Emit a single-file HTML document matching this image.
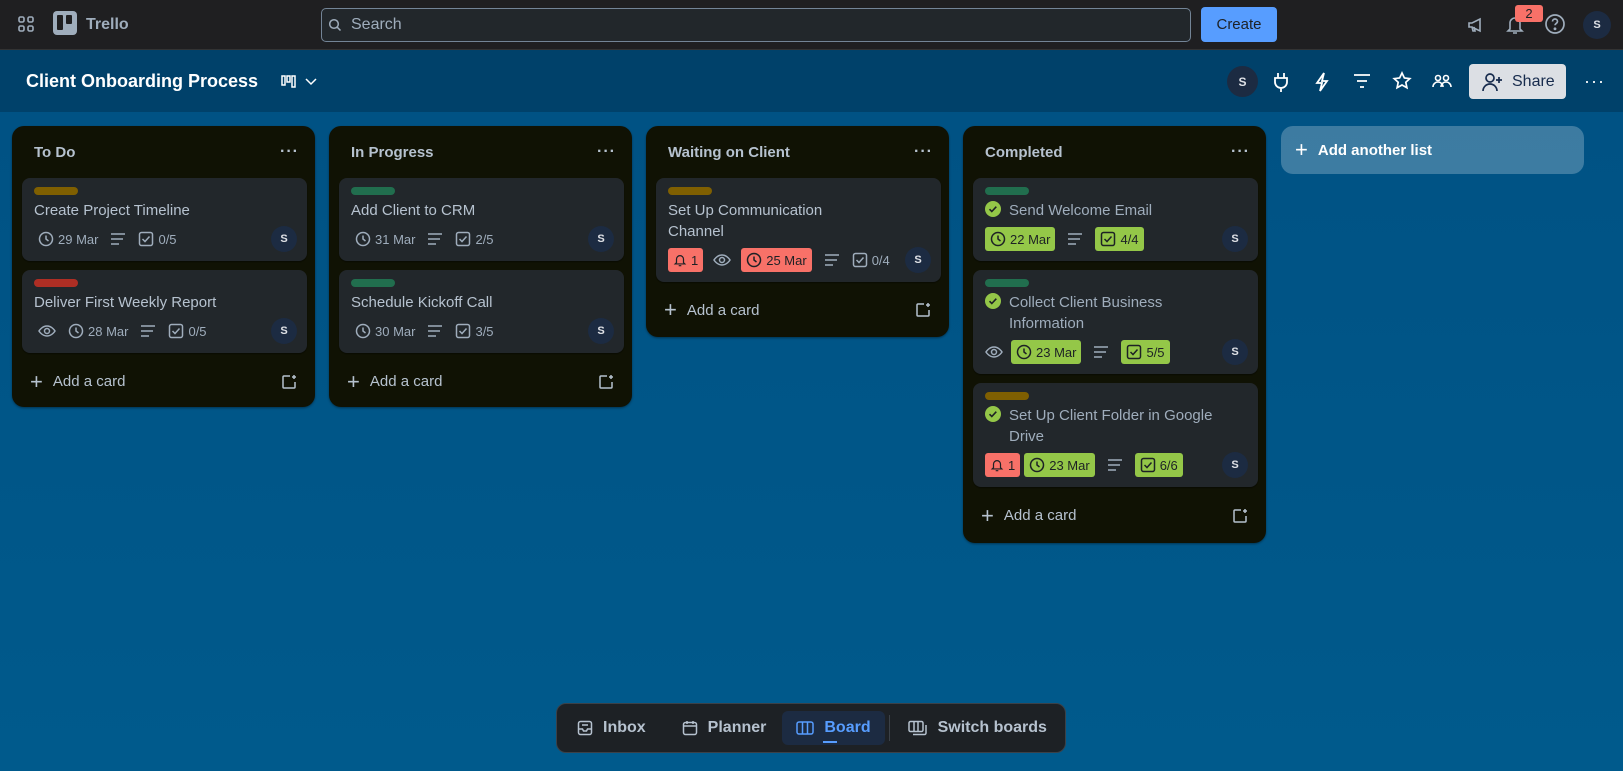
<!DOCTYPE html>
<html><head><meta charset="utf-8"><style>
*{box-sizing:border-box;margin:0;padding:0}
body{width:1623px;height:771px;overflow:hidden;font-family:"Liberation Sans",sans-serif;background:#005a8c;color:#b6c2cf;position:relative}
.top{position:absolute;left:0;top:0;width:1623px;height:50px;background:#1f1f21;border-bottom:1px solid #333}
.bh{position:absolute;left:0;top:50px;width:1623px;height:62px;background:#00416a}
.board{position:absolute;left:0;top:112px;width:1623px;height:659px;background:linear-gradient(#005284,#005a8c)}
.abs{position:absolute}
.list{position:absolute;top:126px;width:303px;background:#101204;border-radius:12px;box-shadow:0 1px 2px rgba(0,0,0,.4)}
.lh{height:52px;padding:0 0 0 22px;display:flex;align-items:center;justify-content:space-between;font-weight:bold;font-size:15px;color:#b6c2cf}
.dots{margin-right:16px;letter-spacing:1px;font-size:16px}
.card{margin:0 8px 9px 10px;background:#22272b;border-radius:8px;padding:9px 12px 8px 12px;position:relative;box-shadow:0 1px 1px rgba(0,0,0,.4)}
.lab{width:44px;height:8px;border-radius:4px;margin-bottom:5px}
.t{font-size:15px;line-height:21px;color:#b6c2cf}
.meta{display:flex;align-items:center;height:28px;margin-top:4px;font-size:13px;color:#9fadbc}
.meta>span{display:flex;align-items:center;margin-right:12px;gap:4px}
.badge{padding:0 5px;height:24px;border-radius:3px}
.g{background:#94c748;color:#1d2125}.r{background:#f87168;color:#1d2125}
.av{position:absolute;right:10px;bottom:9px;width:26px;height:26px;border-radius:50%;background:#1c2b42;color:#dfe1e6;font-size:11px;font-weight:bold;display:flex;align-items:center;justify-content:center}
.add{height:49px;padding-bottom:10px;display:flex;align-items:center;padding-left:18px;font-size:15px;color:#b6c2cf;position:relative}
.add .p{font-size:22px;margin-right:10px;font-weight:300}
.add svg{position:absolute;right:18px}
.done .t{color:#9fadbc}
.ck{display:inline-block;width:16px;height:16px;vertical-align:-2px;margin-right:8px}
.nav{display:flex;align-items:center;padding:0 16px;gap:10px}
</style></head><body>
<div class="top"></div>
<svg class="abs" style="left:17px;top:15px" width="18" height="18" viewBox="0 0 18 18" fill="none" stroke="#9fadbc" stroke-width="1.6"><rect x="2" y="2" width="5" height="5" rx="1.5"/><rect x="11" y="2" width="5" height="5" rx="1.5"/><rect x="2" y="11" width="5" height="5" rx="1.5"/><rect x="11" y="11" width="5" height="5" rx="1.5"/></svg>
<div class="abs" style="left:53px;top:11px;width:24px;height:24px;border-radius:4px;background:#9fadbc"><div class="abs" style="left:4px;top:4px;width:6px;height:15px;background:#1f1f21;border-radius:1px"></div><div class="abs" style="left:13px;top:4px;width:6px;height:9px;background:#1f1f21;border-radius:1px"></div></div>
<div class="abs" style="left:86px;top:16px;font-size:16px;font-weight:bold;color:#9fadbc">Trello</div>
<div class="abs" style="left:321px;top:8px;width:870px;height:34px;border:1px solid #738496;border-radius:5px;background:#22272b"></div>
<svg class="abs" style="left:328px;top:18px" width="14" height="14" viewBox="0 0 14 14" fill="none" stroke="#9fadbc" stroke-width="1.5"><circle cx="6" cy="6" r="4.3"/><path d="M9.2 9.2 12.5 12.5"/></svg>
<div class="abs" style="left:351px;top:16px;font-size:16px;color:#9fadbc">Search</div>
<div class="abs" style="left:1201px;top:7px;width:76px;height:35px;background:#579dff;border-radius:4px;color:#1d2125;font-size:15px;display:flex;align-items:center;justify-content:center">Create</div>
<svg class="abs" style="left:1466px;top:15px" width="20" height="20" viewBox="0 0 20 20" fill="none" stroke="#9fadbc" stroke-width="1.6"><path d="M3 8h3l8-4v12l-8-4H3zM6 12l1 4h2l-1-4"/></svg>
<svg class="abs" style="left:1505px;top:14px" width="20" height="22" viewBox="0 0 20 22" fill="none" stroke="#9fadbc" stroke-width="1.6"><path d="M5 15V9a5 5 0 0110 0v6l2 2H3zM8 19h4"/></svg>
<div class="abs" style="left:1515px;top:5px;width:28px;height:17px;background:#f87168;border-radius:3px;color:#1d2125;font-size:13px;text-align:center;line-height:17px">2</div>
<svg class="abs" style="left:1544px;top:13px" width="22" height="22" viewBox="0 0 22 22" fill="none" stroke="#9fadbc" stroke-width="1.7"><circle cx="11" cy="11" r="9"/><path d="M8.5 8.5a2.5 2.5 0 115 0c0 1.8-2.5 2-2.5 3.8"/><circle cx="11" cy="15.8" r=".6" fill="#9fadbc"/></svg>
<div class="av" style="left:1583px;top:11px;width:28px;height:28px;right:auto;bottom:auto">S</div>

<div class="bh"></div>
<div class="abs" style="left:26px;top:71px;font-size:18px;font-weight:bold;color:#fff">Client Onboarding Process</div>
<svg class="abs" style="left:281px;top:75px" width="40" height="14" viewBox="0 0 40 14" fill="none" stroke="#fff" stroke-width="1.5"><rect x="1" y="1" width="3" height="9"/><rect x="6" y="1" width="3" height="6"/><rect x="11" y="1" width="3" height="11"/><path d="M25 4l5 5 5-5"/></svg>
<div class="av" style="left:1227px;top:66px;width:31px;height:31px;right:auto;bottom:auto;font-size:12px">S</div>
<svg class="abs" style="left:1271px;top:71px" width="20" height="22" viewBox="0 0 20 22" fill="none" stroke="#fff" stroke-width="1.8"><path d="M7 2v5M13 2v5M4 7h12v4a6 6 0 01-12 0zM10 17v4"/></svg>
<svg class="abs" style="left:1313px;top:71px" width="18" height="22" viewBox="0 0 18 22" fill="none" stroke="#fff" stroke-width="1.8"><path d="M11 2L4 12h5l-2 8 7-10H9z"/></svg>
<svg class="abs" style="left:1352px;top:73px" width="20" height="16" viewBox="0 0 20 16" fill="none" stroke="#fff" stroke-width="1.8"><path d="M2 2h16M5 8h10M8 14h4"/></svg>
<svg class="abs" style="left:1392px;top:71px" width="20" height="20" viewBox="0 0 20 20" fill="none" stroke="#fff" stroke-width="1.7"><path d="M10 2l2.4 5 5.4.6-4 3.7 1.1 5.4L10 14l-4.9 2.7 1.1-5.4-4-3.7 5.4-.6z"/></svg>
<svg class="abs" style="left:1432px;top:73px" width="20" height="16" viewBox="0 0 20 16" fill="none" stroke="#fff" stroke-width="1.6"><circle cx="6" cy="5" r="2.5"/><circle cx="14" cy="5" r="2.5"/><path d="M1 14a5 5 0 0110 0M9 14a5 5 0 0110 0"/></svg>
<div class="abs" style="left:1469px;top:64px;width:97px;height:35px;background:#dcdfe4;border-radius:4px;color:#172b4d;font-size:16px;display:flex;align-items:center;padding-left:13px"><svg width="22" height="20" viewBox="0 0 22 20" fill="none" stroke="#172b4d" stroke-width="1.7" style="margin-right:8px"><circle cx="8" cy="6" r="4"/><path d="M1 19a7 7 0 0114 0M17 5v6M14 8h6"/></svg>Share</div>
<div class="abs" style="left:1584px;top:71px;color:#fff;font-size:18px;letter-spacing:1px">···</div>

<div class="board"></div>

<svg width="0" height="0" style="position:absolute"><defs>
<symbol id="clk" viewBox="0 0 16 16"><circle cx="8" cy="8" r="6.5" fill="none" stroke="currentColor" stroke-width="1.5"/><path d="M8 4.5V8l2.5 2" fill="none" stroke="currentColor" stroke-width="1.5"/></symbol>
<symbol id="dsc" viewBox="0 0 16 16"><path d="M1 3h14M1 8h12M1 13h8" fill="none" stroke="currentColor" stroke-width="1.5"/></symbol>
<symbol id="chk" viewBox="0 0 16 16"><rect x="1.5" y="1.5" width="13" height="13" rx="2" fill="none" stroke="currentColor" stroke-width="1.5"/><path d="M4.5 8l2.5 2.5 4.5-5" fill="none" stroke="currentColor" stroke-width="1.5"/></symbol>
<symbol id="eye" viewBox="0 0 18 16"><path d="M1 8s3-5 8-5 8 5 8 5-3 5-8 5-8-5-8-5z" fill="none" stroke="currentColor" stroke-width="1.5"/><circle cx="9" cy="8" r="2.5" fill="none" stroke="currentColor" stroke-width="1.5"/></symbol>
<symbol id="bel" viewBox="0 0 16 16"><path d="M4 11V7a4 4 0 018 0v4l1.5 1.5h-11zM6.5 14.5h3" fill="none" stroke="currentColor" stroke-width="1.4"/></symbol>
<symbol id="ad" viewBox="0 0 16 16"><path d="M9 2H3a1 1 0 00-1 1v10a1 1 0 001 1h10a1 1 0 001-1V8M13 1v4M11 3h4" fill="none" stroke="currentColor" stroke-width="1.5"/></symbol>
<symbol id="okc" viewBox="0 0 16 16"><circle cx="8" cy="8" r="8" fill="#94c748"/><path d="M4.5 8.2l2.3 2.3 4.5-4.8" fill="none" stroke="#1d2125" stroke-width="1.6"/></symbol>
</defs></svg>

<!-- To Do -->
<div class="list" style="left:12px;height:281px">
<div class="lh">To Do<span class="dots">···</span></div>
<div class="card"><div class="lab" style="background:#7f5f01"></div><div class="t">Create Project Timeline</div>
<div class="meta" style="padding-left:4px"><span><svg width="16" height="16"><use href="#clk"/></svg>29 Mar</span><span><svg width="16" height="16"><use href="#dsc"/></svg></span><span><svg width="16" height="16"><use href="#chk"/></svg>0/5</span></div><div class="av">S</div></div>
<div class="card"><div class="lab" style="background:#ae2e24"></div><div class="t">Deliver First Weekly Report</div>
<div class="meta" style="padding-left:4px"><span><svg width="18" height="16"><use href="#eye"/></svg></span><span><svg width="16" height="16"><use href="#clk"/></svg>28 Mar</span><span><svg width="16" height="16"><use href="#dsc"/></svg></span><span><svg width="16" height="16"><use href="#chk"/></svg>0/5</span></div><div class="av">S</div></div>
<div class="add"><span class="p">+</span>Add a card<svg width="16" height="16"><use href="#ad"/></svg></div>
</div>

<!-- In Progress -->
<div class="list" style="left:329px;height:281px">
<div class="lh">In Progress<span class="dots">···</span></div>
<div class="card"><div class="lab" style="background:#216e4e"></div><div class="t">Add Client to CRM</div>
<div class="meta" style="padding-left:4px"><span><svg width="16" height="16"><use href="#clk"/></svg>31 Mar</span><span><svg width="16" height="16"><use href="#dsc"/></svg></span><span><svg width="16" height="16"><use href="#chk"/></svg>2/5</span></div><div class="av">S</div></div>
<div class="card"><div class="lab" style="background:#216e4e"></div><div class="t">Schedule Kickoff Call</div>
<div class="meta" style="padding-left:4px"><span><svg width="16" height="16"><use href="#clk"/></svg>30 Mar</span><span><svg width="16" height="16"><use href="#dsc"/></svg></span><span><svg width="16" height="16"><use href="#chk"/></svg>3/5</span></div><div class="av">S</div></div>
<div class="add"><span class="p">+</span>Add a card<svg width="16" height="16"><use href="#ad"/></svg></div>
</div>

<!-- Waiting -->
<div class="list" style="left:646px;height:211px">
<div class="lh">Waiting on Client<span class="dots">···</span></div>
<div class="card"><div class="lab" style="background:#7f5f01"></div><div class="t">Set Up Communication<br>Channel</div>
<div class="meta"><span class="badge r" style="margin-right:10px"><svg width="14" height="14"><use href="#bel"/></svg>1</span><span style="margin-right:10px"><svg width="18" height="16"><use href="#eye"/></svg></span><span class="badge r"><svg width="16" height="16"><use href="#clk"/></svg>25 Mar</span><span><svg width="16" height="16"><use href="#dsc"/></svg></span><span><svg width="16" height="16"><use href="#chk"/></svg>0/4</span></div><div class="av">S</div></div>
<div class="add" style="height:46px;padding-bottom:8px"><span class="p">+</span>Add a card<svg width="16" height="16"><use href="#ad"/></svg></div>
</div>

<!-- Completed -->
<div class="list done" style="left:963px;height:417px">
<div class="lh" style="color:#b6c2cf">Completed<span class="dots">···</span></div>
<div class="card"><div class="lab" style="background:#216e4e"></div><div class="t"><svg class="ck"><use href="#okc"/></svg>Send Welcome Email</div>
<div class="meta"><span class="badge g"><svg width="16" height="16"><use href="#clk"/></svg>22 Mar</span><span><svg width="16" height="16"><use href="#dsc"/></svg></span><span class="badge g"><svg width="16" height="16"><use href="#chk"/></svg>4/4</span></div><div class="av">S</div></div>
<div class="card"><div class="lab" style="background:#216e4e"></div><div class="t" style="padding-left:24px;text-indent:-24px"><svg class="ck"><use href="#okc"/></svg>Collect Client Business<br>Information</div>
<div class="meta"><span style="margin-right:8px"><svg width="18" height="16"><use href="#eye"/></svg></span><span class="badge g"><svg width="16" height="16"><use href="#clk"/></svg>23 Mar</span><span><svg width="16" height="16"><use href="#dsc"/></svg></span><span class="badge g"><svg width="16" height="16"><use href="#chk"/></svg>5/5</span></div><div class="av">S</div></div>
<div class="card"><div class="lab" style="background:#7f5f01"></div><div class="t" style="padding-left:24px;text-indent:-24px"><svg class="ck"><use href="#okc"/></svg>Set Up Client Folder in Google<br>Drive</div>
<div class="meta"><span class="badge r" style="margin-right:4px"><svg width="14" height="14"><use href="#bel"/></svg>1</span><span class="badge g"><svg width="16" height="16"><use href="#clk"/></svg>23 Mar</span><span><svg width="16" height="16"><use href="#dsc"/></svg></span><span class="badge g"><svg width="16" height="16"><use href="#chk"/></svg>6/6</span></div><div class="av">S</div></div>
<div class="add"><span class="p">+</span>Add a card<svg width="16" height="16"><use href="#ad"/></svg></div>
</div>

<div class="abs" style="left:1281px;top:126px;width:303px;height:48px;border-radius:12px;background:rgba(255,255,255,.24);color:#fff;font-size:15px;font-weight:bold;display:flex;align-items:center;padding-left:14px"><span style="font-size:22px;font-weight:normal;margin-right:10px">+</span>Add another list</div>

<div class="abs" style="left:556px;top:703px;width:510px;height:50px;background:#1d2125;border-radius:10px;border:1px solid #3b4148;display:flex;align-items:center;padding-left:4px;font-size:16px;font-weight:bold;color:#b6c2cf">
<span class="nav"><svg width="16" height="16" viewBox="0 0 16 16" fill="none" stroke="#b6c2cf" stroke-width="1.5"><rect x="1.5" y="1.5" width="13" height="13" rx="2"/><path d="M1.5 9h4l1 2h3l1-2h4M5 5h6"/></svg>Inbox</span>
<span class="nav" style="padding-left:20px"><svg width="16" height="16" viewBox="0 0 16 16" fill="none" stroke="#b6c2cf" stroke-width="1.5"><rect x="1.5" y="2.5" width="13" height="12" rx="2"/><path d="M1.5 6h13M5 1v3M11 1v3"/></svg>Planner</span>
<span class="nav" style="background:#1c2b42;color:#579dff;height:34px;border-radius:6px;position:relative;padding:0 14px"><svg width="18" height="16" viewBox="0 0 18 16" fill="none" stroke="#579dff" stroke-width="1.5"><rect x="1" y="2" width="16" height="12" rx="2"/><path d="M6.5 2v12M11.5 2v12"/></svg>Board<span style="position:absolute;left:41px;bottom:2px;width:14px;height:2px;background:#579dff"></span></span>
<span style="width:1px;height:26px;background:#3b4148;margin:0 4px"></span>
<span class="nav" style="padding-left:14px"><svg width="20" height="16" viewBox="0 0 20 16" fill="none" stroke="#b6c2cf" stroke-width="1.5"><rect x="1" y="1.5" width="14" height="10" rx="1.5"/><path d="M6 1.5v10M10 1.5v10M18 5v8a1.5 1.5 0 01-1.5 1.5H5"/></svg>Switch boards</span>
</div>
</body></html>
